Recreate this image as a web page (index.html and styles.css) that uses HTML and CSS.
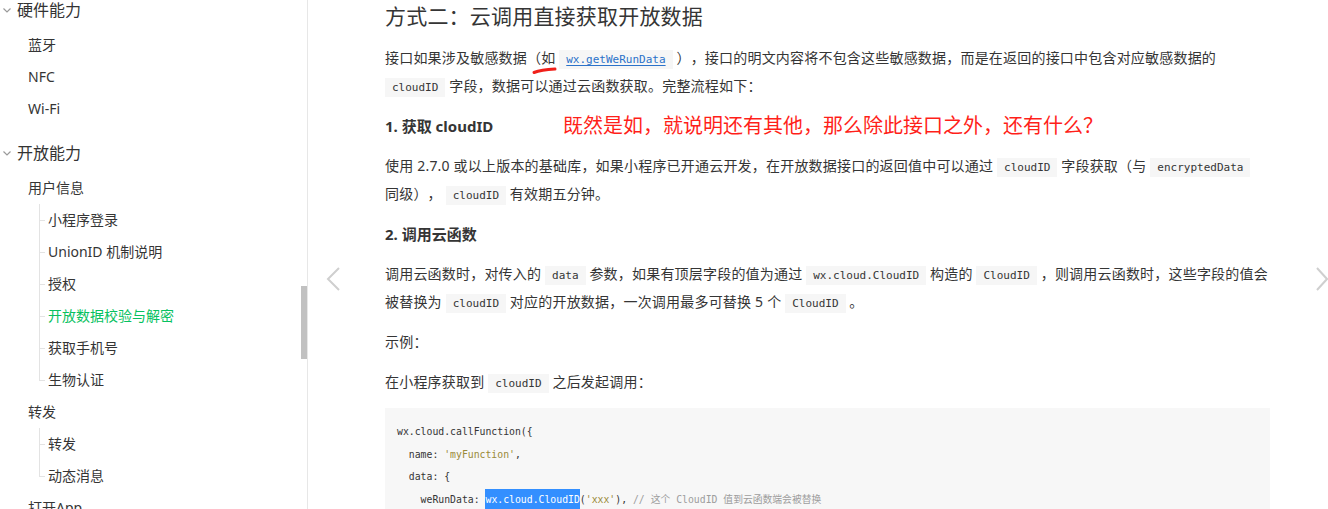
FILE: index.html
```html
<!DOCTYPE html>
<html lang="zh-CN">
<head>
    <meta charset="UTF-8">
    <meta name="viewport" content="width=device-width, initial-scale=1.0">
    <title>开放数据校验与解密</title>
    <link rel="stylesheet" href="styles.css">
</head>
<body>
<div class="page">
    <nav class="sidebar">
        <div class="group first">
            <div class="group-title">
                <svg class="chevron" width="8" height="5" viewBox="0 0 8 5"><polyline points="0.5,0.5 4,4 7.5,0.5" fill="none" stroke="#9a9a9a" stroke-width="1.2"/></svg>
                硬件能力
            </div>
            <ul class="items">
                <li>蓝牙</li>
                <li>NFC</li>
                <li>Wi-Fi</li>
            </ul>
        </div>
        <div class="group">
            <div class="group-title">
                <svg class="chevron" width="8" height="5" viewBox="0 0 8 5"><polyline points="0.5,0.5 4,4 7.5,0.5" fill="none" stroke="#9a9a9a" stroke-width="1.2"/></svg>
                开放能力
            </div>
            <div class="sub">
                <div class="sub-title">用户信息</div>
                <ul class="tree">
                    <li>小程序登录</li>
                    <li>UnionID 机制说明</li>
                    <li>授权</li>
                    <li class="active">开放数据校验与解密</li>
                    <li>获取手机号</li>
                    <li>生物认证</li>
                </ul>
            </div>
            <div class="sub">
                <div class="sub-title">转发</div>
                <ul class="tree">
                    <li>转发</li>
                    <li>动态消息</li>
                </ul>
            </div>
            <div class="sub">
                <div class="sub-title">打开App</div>
            </div>
        </div>
        <div class="scrollbar"></div>
    </nav>

    <main class="main">
        <svg class="arrow prev" width="14" height="24" viewBox="0 0 14 24"><polyline points="13,1 2,12 13,23" fill="none" stroke="#cfcfcf" stroke-width="2"/></svg>
        <svg class="arrow next" width="12" height="24" viewBox="0 0 12 24"><polyline points="1,1 11,12 1,23" fill="none" stroke="#cfcfcf" stroke-width="2"/></svg>

        <article class="content">
            <h2>方式二：云调用直接获取开放数据</h2>
            <p>接口如果涉及敏感数据（如 <a class="code link" href="#">wx.getWeRunData</a> ），接口的明文内容将不包含这些敏感数据，而是在返回的接口中包含对应敏感数据的 <code class="code">cloudID</code> 字段，数据可以通过云函数获取。完整流程如下：</p>
            <h3>1. 获取 cloudID</h3>
            <p>使用 2.7.0 或以上版本的基础库，如果小程序已开通云开发，在开放数据接口的返回值中可以通过 <code class="code">cloudID</code> 字段获取（与 <code class="code">encryptedData</code><br>同级）， <code class="code">cloudID</code> 有效期五分钟。</p>
            <h3>2. 调用云函数</h3>
            <p>调用云函数时，对传入的 <code class="code">data</code> 参数，如果有顶层字段的值为通过 <code class="code">wx.cloud.CloudID</code> 构造的 <code class="code">CloudID</code> ，则调用云函数时，这些字段的值会被替换为 <code class="code">cloudID</code> 对应的开放数据，一次调用最多可替换 5 个 <code class="code">CloudID</code> 。</p>
            <p>示例：</p>
            <p>在小程序获取到 <code class="code">cloudID</code> 之后发起调用：</p>
<pre class="codeblock">wx.cloud.callFunction({
  name: <span class="str">'myFunction'</span>,
  data: {
    weRunData: <span class="sel">wx.cloud.CloudID</span>(<span class="str">'xxx'</span>), <span class="cmt">// 这个 CloudID 值到云函数端会被替换</span>
    obj: {
      shareInfo: wx.cloud.CloudID(<span class="str">'yyy'</span>), <span class="cmt">// 非顶层字段的 CloudID 不会被替换，会原样字符串展示</span>
    }
  }
})</pre>

            <div class="note">既然是如，就说明还有其他，那么除此接口之外，还有什么？</div>
            <svg class="scribble" width="26" height="9" viewBox="0 0 26 9"><path d="M2 6.5 C 7 4.5, 13 3.5, 23 3" fill="none" stroke="#f0201a" stroke-width="3" stroke-linecap="round"/></svg>
        </article>
    </main>
</div>
</body>
</html>
```

FILE: styles.css
```css
body { margin: 0; height: 509px; overflow: hidden; background: #fff; color: #353535; font-family: "Noto Sans", "Noto Sans CJK SC", sans-serif; text-spacing-trim: space-all; }
ul { list-style: none; margin: 0; padding: 0; }

.page { display: flex; height: 509px; }

/* sidebar */
.sidebar { position: relative; width: 307px; flex: none; border-right: 1px solid #e7e7e7; overflow: hidden; font-size: 14px; }
.group { margin-top: 13px; }
.group.first { margin-top: -5px; }
.group-title { display: flex; align-items: center; gap: 6px; padding-left: 3px; font-size: 16px; line-height: 30px; margin-bottom: 4px; color: #333; }
.chevron { margin-top: 1px; }
.items li, .sub-title { padding-left: 28px; line-height: 32px; }
.tree { margin-left: 39px; }
.tree li { position: relative; padding-left: 9px; line-height: 32px; }
.tree li::before { content: ""; position: absolute; left: 0; top: 0; bottom: 0; border-left: 1px solid #e3e3e3; }
.tree li:last-child::before { bottom: 50%; }
.tree li::after { content: ""; position: absolute; left: 0; top: 50%; width: 6px; border-top: 1px solid #e3e3e3; }
.tree li.active { color: #07c160; }
.scrollbar { position: absolute; right: 0; top: 286px; width: 6px; height: 73px; background: #c1c1c1; }

/* main */
.main { position: relative; flex: 1; padding-left: 77px; }
.arrow { position: absolute; top: 267px; }
.arrow.prev { left: 18px; }
.arrow.next { right: 0; }

.content { position: relative; width: 887px; font-size: 14px; line-height: 28px; letter-spacing: 0.2px; }
.content h2 { margin: 0 0 12px; font-size: 21px; font-weight: normal; line-height: 32px; color: #353535; }
.content h3 { margin: 12px 0; font-size: 15px; font-weight: bold; line-height: 28px; letter-spacing: 0; }
.content p { margin: 12px 0; }

.code { font-family: "DejaVu Sans Mono", monospace; font-size: 11px; line-height: 14px; letter-spacing: 0; background: #f6f6f6; padding: 3px 7px; color: #353535; }
.link { color: #2b72c9; text-decoration: underline; text-underline-offset: 2px; }

.codeblock { margin: 12px 2px 0 0; padding: 13px 12px; background: #f7f7f7; font-family: "DejaVu Sans Mono", monospace; font-size: 9.8px; line-height: 22.5px; letter-spacing: 0; color: #353535; }
.codeblock .str { color: #9a8a38; }
.codeblock .cmt { color: #9d9d9d; font-family: "DejaVu Sans Mono", "Noto Sans CJK SC", monospace; }
.codeblock .sel { background: #338fff; color: #fff; padding: 5px 0; }

.note { position: absolute; left: 178px; top: 111px; font-size: 20px; line-height: 28px; letter-spacing: 0; color: #ff1f1a; white-space: nowrap; font-family: "Noto Sans CJK SC", sans-serif; }
.scribble { position: absolute; left: 147px; top: 66px; }
```
